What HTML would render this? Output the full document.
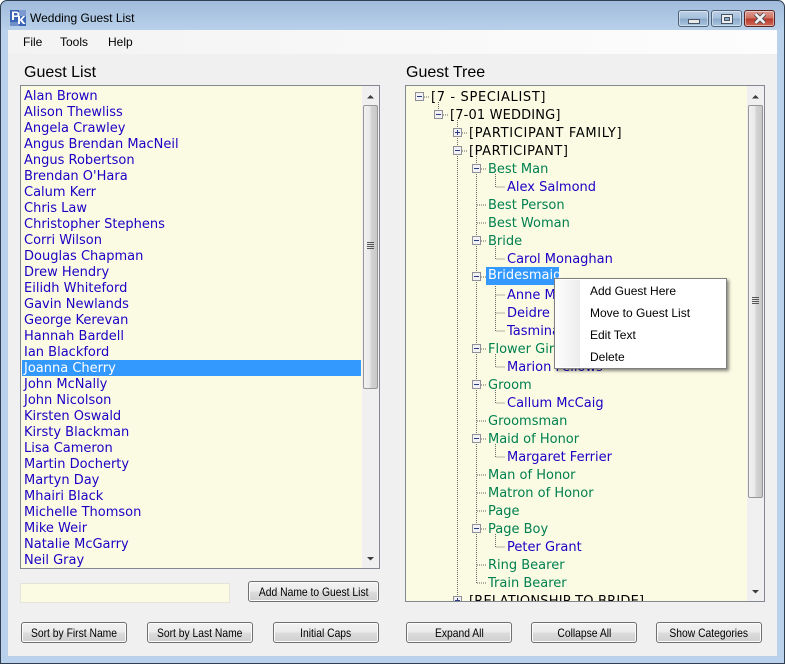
<!DOCTYPE html>
<html><head><meta charset="utf-8"><title>Wedding Guest List</title>
<style>
html,body{margin:0;padding:0;width:785px;height:664px;overflow:hidden;background:#fff}
*{box-sizing:border-box}
.a{position:absolute}
#win{position:absolute;left:0;top:0;width:785px;height:664px;border-radius:7px 7px 0 0;background:linear-gradient(#a0bbdb 0,#b9d1ea 30px,#b9d1ea 100%);border:1px solid #2f3f4f;overflow:hidden}
.t{position:absolute;white-space:nowrap;font-family:"DejaVu Sans","Liberation Sans",sans-serif;font-size:13px;line-height:16px;height:16px}
.s{position:absolute;white-space:nowrap;font-family:"Liberation Sans",sans-serif;font-size:12px;color:#000}
.b{position:absolute;height:21px;width:106px;border:1px solid #707070;border-radius:3px;background:linear-gradient(#f2f2f2 0,#ebebeb 48%,#dcdcdc 52%,#cfcfcf 100%);box-shadow:inset 0 0 0 1px #fbfbfb;font:12px/20px "Liberation Sans",sans-serif;text-align:center;color:#000;white-space:nowrap}
.b span{display:inline-block;transform:scaleX(.86);transform-origin:50% 50%}
.box{position:absolute;background:#fbfbe4;border:1px solid #828790;overflow:hidden}
.sb{position:absolute;width:17px;background:#f0f0f0}
.th{position:absolute;left:1px;width:15px;border:1px solid #979797;border-radius:2px;background:linear-gradient(90deg,#f1f1f1,#e9e9e9 45%,#d4d4d4 55%,#c8c8c8)}
.wb{position:absolute;top:10px;height:17px;border:1px solid #4f6378;border-radius:3px;box-shadow:inset 0 0 0 1px rgba(255,255,255,.45)}
.bl{color:#1c00c4}.gr{color:#00804f}.bk{color:#000}
.m{position:absolute;font:12px/14px "Liberation Sans",sans-serif;color:#000;white-space:nowrap;left:35px}
</style></head><body>
<div id="win"></div>

<!-- title bar -->
<svg class="a" style="left:10px;top:10px" width="16" height="16" viewBox="0 0 16 16">
<rect width="16" height="16" fill="#3a64b4"/>
<rect x="9" y="0" width="7" height="6" fill="#7d9ad0"/><rect x="0" y="12" width="9" height="4" fill="#6f8fcb"/>
<path d="M2 1.500h4.500a2 2 0 0 1 0 5.500H4V10H2zM4 3v2.500h2.300a1.200 1.200 0 0 0 0-2.500z" fill="#fff"/>
<path d="M8 6h2v3.500L13 6h2.300l-3.200 3.600L15.500 14h-2.400L10 10.500V14H8z" fill="#fff"/>
</svg>
<div class="s" style="left:30px;top:11px;line-height:14px">Wedding Guest List</div>

<div class="wb" style="left:678px;width:31px;background:linear-gradient(#bcd0e6,#a5bfdc 50%,#8aa8c9 52%,#a9c6e0)"><div class="a" style="left:9px;top:8px;width:12px;height:5px;background:#e8e8e8;border:1px solid #45566a"></div></div>
<div class="wb" style="left:711px;width:31px;background:linear-gradient(#bcd0e6,#a5bfdc 50%,#8aa8c9 52%,#a9c6e0)"><div class="a" style="left:9px;top:3px;width:12px;height:10px;background:#eee;border:1px solid #45566a"></div><div class="a" style="left:12px;top:6px;width:6px;height:4px;background:#8fa8c4;border:1px solid #45566a"></div></div>
<div class="wb" style="left:744px;width:31px;border-color:#5a2424;background:linear-gradient(#dd9c92,#cf6f60 48%,#b8392b 52%,#cf6a58)">
<svg class="a" style="left:8px;top:1px" width="14" height="13" viewBox="0 0 14 13"><path d="M2.500 2L11.500 11M11.500 2L2.500 11" stroke="#4c4c55" stroke-width="4.400"/><path d="M2.500 2L11.500 11M11.500 2L2.500 11" stroke="#f2f2f2" stroke-width="2.600"/></svg></div>

<!-- client -->
<div class="a" style="left:8px;top:30px;width:769px;height:626px;background:#f0f0f0"></div>
<div class="a" style="left:8px;top:30px;width:769px;height:24px;background:linear-gradient(90deg,#f3f3f3,#f9f9f9 60%,#fdfdfd)"></div>
<div class="s" style="left:23px;top:35px;line-height:14px">File</div>
<div class="s" style="left:60px;top:35px;line-height:14px">Tools</div>
<div class="s" style="left:108px;top:35px;line-height:14px">Help</div>
<div class="s" style="left:24px;top:64px;font-size:16px;line-height:18px">Guest List</div>
<div class="s" style="left:406px;top:64px;font-size:16px;line-height:18px">Guest Tree</div>

<!-- guest list -->
<div class="box" style="left:20px;top:85px;width:360px;height:484px"></div>
<div class="a" style="left:22px;top:360px;width:339px;height:16px;background:#3399ff"></div>
<div class="a" style="left:0;top:1px;width:360px;height:580px">
<div class="t bl" style="left:24px;top:88px">Alan Brown</div>
<div class="t bl" style="left:24px;top:104px">Alison Thewliss</div>
<div class="t bl" style="left:24px;top:120px">Angela Crawley</div>
<div class="t bl" style="left:24px;top:136px">Angus Brendan MacNeil</div>
<div class="t bl" style="left:24px;top:152px">Angus Robertson</div>
<div class="t bl" style="left:24px;top:168px">Brendan O'Hara</div>
<div class="t bl" style="left:24px;top:184px">Calum Kerr</div>
<div class="t bl" style="left:24px;top:200px">Chris Law</div>
<div class="t bl" style="left:24px;top:216px">Christopher Stephens</div>
<div class="t bl" style="left:24px;top:232px">Corri Wilson</div>
<div class="t bl" style="left:24px;top:248px">Douglas Chapman</div>
<div class="t bl" style="left:24px;top:264px">Drew Hendry</div>
<div class="t bl" style="left:24px;top:280px">Eilidh Whiteford</div>
<div class="t bl" style="left:24px;top:296px">Gavin Newlands</div>
<div class="t bl" style="left:24px;top:312px">George Kerevan</div>
<div class="t bl" style="left:24px;top:328px">Hannah Bardell</div>
<div class="t bl" style="left:24px;top:344px">Ian Blackford</div>
<div class="t" style="left:24px;top:360px;color:#fff">Joanna Cherry</div>
<div class="t bl" style="left:24px;top:376px">John McNally</div>
<div class="t bl" style="left:24px;top:392px">John Nicolson</div>
<div class="t bl" style="left:24px;top:408px">Kirsten Oswald</div>
<div class="t bl" style="left:24px;top:424px">Kirsty Blackman</div>
<div class="t bl" style="left:24px;top:440px">Lisa Cameron</div>
<div class="t bl" style="left:24px;top:456px">Martin Docherty</div>
<div class="t bl" style="left:24px;top:472px">Martyn Day</div>
<div class="t bl" style="left:24px;top:488px">Mhairi Black</div>
<div class="t bl" style="left:24px;top:504px">Michelle Thomson</div>
<div class="t bl" style="left:24px;top:520px">Mike Weir</div>
<div class="t bl" style="left:24px;top:536px">Natalie McGarry</div>
<div class="t bl" style="left:24px;top:552px">Neil Gray</div>
</div>
<div class="sb" style="left:362px;top:86px;height:482px">
<div class="th" style="top:19px;height:284px"></div>
<svg class="a" style="left:0;top:0" width="17" height="482"><path d="M5 12.500h7L8.500 9z" fill="#3c3c3c"/><path d="M5 471h7l-3.500 3.500z" fill="#3c3c3c"/><path d="M5 156.500h7M5 158.500h7M5 160.500h7M5 162.500h7" stroke="#555"/></svg>
</div>

<!-- input + buttons -->
<div class="a" style="left:20px;top:583px;width:210px;height:20px;background:#fbfbe4;border:1px solid #e4e4dc"></div>
<div class="b" style="left:248px;top:581px;width:131px"><span>Add Name to Guest List</span></div>
<div class="b" style="left:21px;top:622px"><span>Sort by First Name</span></div>
<div class="b" style="left:147px;top:622px"><span>Sort by Last Name</span></div>
<div class="b" style="left:273px;top:622px"><span>Initial Caps</span></div>
<div class="b" style="left:406px;top:622px"><span>Expand All</span></div>
<div class="b" style="left:531px;top:622px"><span>Collapse All</span></div>
<div class="b" style="left:656px;top:622px"><span>Show Categories</span></div>

<!-- tree -->
<div class="box" style="left:405px;top:85px;width:360px;height:517px">
<svg class="a" style="left:-1px;top:-1px" width="360" height="517">
<g transform="translate(-405,-84)" stroke="#666" stroke-width="1" stroke-dasharray="1 1" fill="none" shape-rendering="crispEdges">
<path d="M424 96H429M443 114H448"/>
<path d="M438.500 101V109"/>
<path d="M457.500 119V127M457.500 137V145M457.500 155V595"/>
<path d="M462 132H467M462 150H467"/>
<path d="M476.500 155V582"/>
<path d="M481 168H486M477 204H486M477 222H486M481 240H486M481 276H486M481 348H486M481 384H486M477 420H486M481 438H486M477 474H486M477 492H486M477 510H486M481 528H486M477 564H486M477 582H486"/>
<path d="M495.500 173V186H505M495.500 245V258H505M495.500 281V330H505M495.500 294H505M495.500 312H505M495.500 353V366H505M495.500 389V402H505M495.500 443V456H505M495.500 533V546H505"/>
</g>
<g transform="translate(-405,-84)" fill="#f2f2f4" stroke="#8f8f98" shape-rendering="crispEdges">
<rect x="415.500" y="91.500" width="8" height="8"/><rect x="434.500" y="109.500" width="8" height="8"/><rect x="453.500" y="127.500" width="8" height="8"/><rect x="453.500" y="145.500" width="8" height="8"/>
<rect x="472.500" y="163.500" width="8" height="8"/><rect x="472.500" y="235.500" width="8" height="8"/><rect x="472.500" y="271.500" width="8" height="8"/><rect x="472.500" y="343.500" width="8" height="8"/><rect x="472.500" y="379.500" width="8" height="8"/><rect x="472.500" y="433.500" width="8" height="8"/><rect x="472.500" y="523.500" width="8" height="8"/><rect x="453.500" y="595.500" width="8" height="8"/>
</g>
<g transform="translate(-405,-85)">
<path d="M417 96.500h5M436 114.500h5M455 132.500h5M457.500 130v5M455 150.500h5M474 168.500h5M474 240.500h5M474 276.500h5M474 348.500h5M474 384.500h5M474 438.500h5M474 528.500h5M455 600.500h5M457.500 598v5" stroke="#2a3a80" shape-rendering="crispEdges"/>
</g>
</svg>
</div>
<div style="position:absolute;left:406px;top:90px;width:341px;height:511px;overflow:hidden">
<div class="a" style="left:80px;top:177px;width:73px;height:18px;background:#3399ff"></div>
<div class="t bk" style="left:25px;top:0px;letter-spacing:.65px">[7 - SPECIALIST]</div>
<div class="t bk" style="left:44px;top:18px;letter-spacing:.15px">[7-01 WEDDING]</div>
<div class="t bk" style="left:63px;top:36px;letter-spacing:.65px">[PARTICIPANT FAMILY]</div>
<div class="t bk" style="left:63px;top:54px;letter-spacing:.55px">[PARTICIPANT]</div>
<div class="t gr" style="left:82px;top:72px">Best Man</div>
<div class="t bl" style="left:101px;top:90px">Alex Salmond</div>
<div class="t gr" style="left:82px;top:108px">Best Person</div>
<div class="t gr" style="left:82px;top:126px">Best Woman</div>
<div class="t gr" style="left:82px;top:144px">Bride</div>
<div class="t bl" style="left:101px;top:162px">Carol Monaghan</div>
<div class="t" style="left:82px;top:178px;color:#fff">Bridesmaid</div>
<div class="t bl" style="left:101px;top:198px">Anne McLaughlin</div>
<div class="t bl" style="left:101px;top:216px">Deidre Brock</div>
<div class="t bl" style="left:101px;top:234px">Tasmina Ahmed-Sheikh</div>
<div class="t gr" style="left:82px;top:252px">Flower Girl</div>
<div class="t bl" style="left:101px;top:270px">Marion Fellows</div>
<div class="t gr" style="left:82px;top:288px">Groom</div>
<div class="t bl" style="left:101px;top:306px">Callum McCaig</div>
<div class="t gr" style="left:82px;top:324px">Groomsman</div>
<div class="t gr" style="left:82px;top:342px">Maid of Honor</div>
<div class="t bl" style="left:101px;top:360px">Margaret Ferrier</div>
<div class="t gr" style="left:82px;top:378px">Man of Honor</div>
<div class="t gr" style="left:82px;top:396px">Matron of Honor</div>
<div class="t gr" style="left:82px;top:414px">Page</div>
<div class="t gr" style="left:82px;top:432px">Page Boy</div>
<div class="t bl" style="left:101px;top:450px">Peter Grant</div>
<div class="t gr" style="left:82px;top:468px">Ring Bearer</div>
<div class="t gr" style="left:82px;top:486px">Train Bearer</div>
<div class="t bk" style="left:63px;top:504px;letter-spacing:.2px">[RELATIONSHIP TO BRIDE]</div>
</div>
<div class="sb" style="left:747px;top:86px;height:515px">
<div class="th" style="top:19px;height:393px"></div>
<svg class="a" style="left:0;top:0" width="17" height="515"><path d="M5 12.500h7L8.500 9z" fill="#3c3c3c"/><path d="M5 504h7l-3.500 3.500z" fill="#3c3c3c"/><path d="M5 211.500h7M5 213.500h7M5 215.500h7M5 217.500h7" stroke="#555"/></svg>
</div>

<!-- context menu -->
<div class="a" style="left:554px;top:278px;width:173px;height:91px;background:#fff;border:1px solid #808080;box-shadow:2px 2px 3px rgba(0,0,0,.45)">
<div class="a" style="left:1px;top:1px;width:24px;height:87px;background:linear-gradient(90deg,#fdfdfd,#ececec)"></div>
<div class="m" style="top:5px">Add Guest Here</div>
<div class="m" style="top:27px">Move to Guest List</div>
<div class="m" style="top:49px">Edit Text</div>
<div class="m" style="top:71px">Delete</div>
</div>
</body></html>
